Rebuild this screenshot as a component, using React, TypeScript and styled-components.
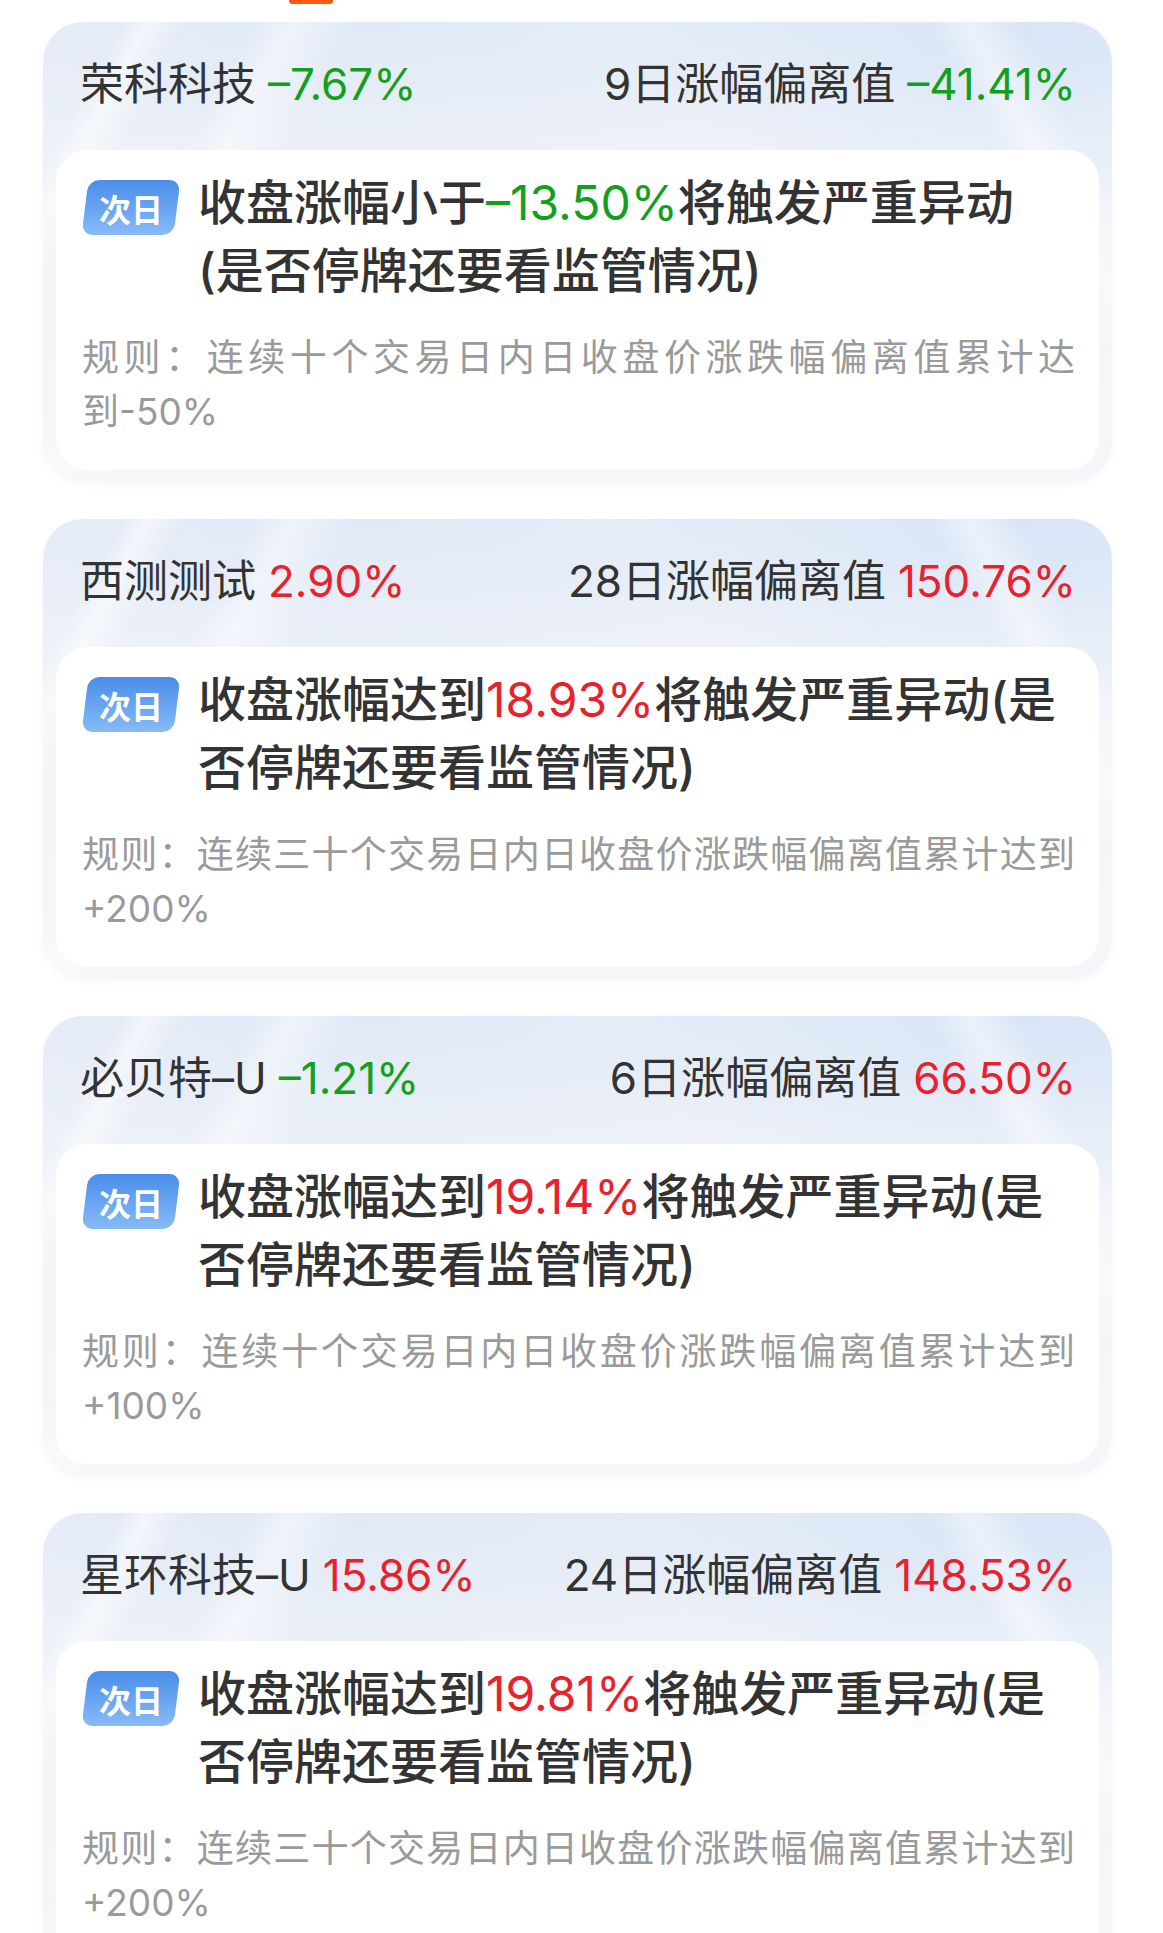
import React from "react";
import styled, { createGlobalStyle } from "styled-components";

const GlobalStyle = createGlobalStyle`
  html, body {
    margin: 0;
    padding: 0;
    background: #ffffff;
  }
  body {
    font-family: Inter, "Noto Sans CJK SC", "Noto Sans", sans-serif;
    color: #333333;
    -webkit-font-smoothing: antialiased;
  }
  * { box-sizing: border-box; }
`;

const Page = styled.div`
  width: 1163px;
  display: flex;
  flex-direction: column;
`;

const TabStrip = styled.div`
  height: 4px;
  display: flex;
  padding-left: 289px;
`;

const TabIndicator = styled.div`
  width: 44px;
  height: 4px;
  background: #ff5a14;
  border-radius: 0 0 3px 3px;
`;

const List = styled.div`
  display: flex;
  flex-direction: column;
  gap: 37px;
  padding: 18px 0 40px 43px;
`;

const Card = styled.section`
  width: 1069px;
  border-radius: 40px;
  background:
    linear-gradient(118deg,
      rgba(255,255,255,0) 0%,
      rgba(255,255,255,0) 6%,
      rgba(255,255,255,0.55) 8%,
      rgba(255,255,255,0) 11%,
      rgba(255,255,255,0) 16%,
      rgba(255,255,255,0.45) 19%,
      rgba(255,255,255,0) 24%,
      rgba(255,255,255,0) 100%),
    linear-gradient(62deg,
      rgba(255,255,255,0) 0%,
      rgba(255,255,255,0) 86%,
      rgba(255,255,255,0.45) 89%,
      rgba(255,255,255,0) 93%),
    radial-gradient(ellipse 420px 180px at 92% 0%, rgba(214,228,247,0.9), rgba(214,228,247,0) 100%),
    radial-gradient(ellipse 520px 160px at 30% 0%, rgba(222,232,246,0.8), rgba(222,232,246,0) 100%),
    linear-gradient(180deg, #e9eef6 0%, #eef2f8 28%, #f3f5f9 60%, #f4f6f9 100%);
  box-shadow: 0 2px 8px rgba(40, 70, 120, 0.04);
  display: flex;
  flex-direction: column;
  padding: 0 13px 12px;
`;

const Header = styled.header`
  height: 128px;
  display: flex;
  align-items: center;
  justify-content: space-between;
  padding: 0 23px 4px 24px;
  font-size: 44px;
  line-height: 52px;
  color: #333333;
  white-space: nowrap;
`;

const HeaderGroup = styled.div`
  display: flex;
  align-items: baseline;
  gap: 12px;
`;

const Change = styled.span<{ $tone: "up" | "down" }>`
  color: ${(p) => (p.$tone === "up" ? "#e8222d" : "#12a01c")};
`;

const Body = styled.div`
  background: #ffffff;
  border-radius: 32px;
  padding: 19px 24px 31px 26px;
  display: flex;
  flex-direction: column;
`;

const AlertRow = styled.div`
  display: flex;
  align-items: flex-start;
  gap: 21px;
`;

const Badge = styled.div`
  flex: none;
  width: 92px;
  height: 55px;
  margin: 11px 0 0 3px;
  border-radius: 11px;
  transform: skewX(-7deg);
  background: linear-gradient(180deg, #4b8de9 0%, #6aa6f1 55%, #88bbf6 100%);
  display: flex;
  align-items: center;
  justify-content: center;
`;

const BadgeText = styled.span`
  display: block;
  transform: skewX(7deg);
  color: #ffffff;
  font-family: "Noto Sans CJK SC", sans-serif;
  font-weight: 700;
  font-size: 32px;
  line-height: 1;
`;

const AlertText = styled.p`
  margin: 0;
  width: 877px;
  font-size: 48px;
  line-height: 68px;
  font-weight: 500;
  color: #333333;
`;

const Hl = styled.span<{ $tone: "up" | "down" }>`
  color: ${(p) => (p.$tone === "up" ? "#e8222d" : "#12a01c")};
  font-weight: 400;
`;

const Rule = styled.p`
  margin: 26px 0 0;
  width: 993px;
  font-size: 37px;
  line-height: 54px;
  color: #9a9a9a;
  text-align: justify;
`;

type Tone = "up" | "down";

type Item = {
  name: string;
  change: string;
  changeTone: Tone;
  days: number;
  dev: string;
  devTone: Tone;
  verb: string;
  target: string;
  targetTone: Tone;
  rule: string;
};

const items: Item[] = [
  {
    name: "荣科科技",
    change: "–7.67%",
    changeTone: "down",
    days: 9,
    dev: "–41.41%",
    devTone: "down",
    verb: "收盘涨幅小于",
    target: "–13.50%",
    targetTone: "down",
    rule: "规则：连续十个交易日内日收盘价涨跌幅偏离值累计达到-50%",
  },
  {
    name: "西测测试",
    change: "2.90%",
    changeTone: "up",
    days: 28,
    dev: "150.76%",
    devTone: "up",
    verb: "收盘涨幅达到",
    target: "18.93%",
    targetTone: "up",
    rule: "规则：连续三十个交易日内日收盘价涨跌幅偏离值累计达到+200%",
  },
  {
    name: "必贝特–U",
    change: "–1.21%",
    changeTone: "down",
    days: 6,
    dev: "66.50%",
    devTone: "up",
    verb: "收盘涨幅达到",
    target: "19.14%",
    targetTone: "up",
    rule: "规则：连续十个交易日内日收盘价涨跌幅偏离值累计达到+100%",
  },
  {
    name: "星环科技–U",
    change: "15.86%",
    changeTone: "up",
    days: 24,
    dev: "148.53%",
    devTone: "up",
    verb: "收盘涨幅达到",
    target: "19.81%",
    targetTone: "up",
    rule: "规则：连续三十个交易日内日收盘价涨跌幅偏离值累计达到+200%",
  },
];

export default function App() {
  return (
    <Page lang="zh-CN">
      <GlobalStyle />
      <TabStrip>
        <TabIndicator />
      </TabStrip>
      <List>
        {items.map((it) => (
          <Card key={it.name}>
            <Header>
              <HeaderGroup>
                <span>{it.name}</span>
                <Change $tone={it.changeTone}>{it.change}</Change>
              </HeaderGroup>
              <HeaderGroup>
                <span>{it.days}日涨幅偏离值</span>
                <Change $tone={it.devTone}>{it.dev}</Change>
              </HeaderGroup>
            </Header>
            <Body>
              <AlertRow>
                <Badge>
                  <BadgeText>次日</BadgeText>
                </Badge>
                <AlertText>
                  <span>{it.verb}</span>
                  <Hl $tone={it.targetTone}>{it.target}</Hl>
                  <span>将触发严重异动(是否停牌还要看监管情况)</span>
                </AlertText>
              </AlertRow>
              <Rule>{it.rule}</Rule>
            </Body>
          </Card>
        ))}
      </List>
    </Page>
  );
}
